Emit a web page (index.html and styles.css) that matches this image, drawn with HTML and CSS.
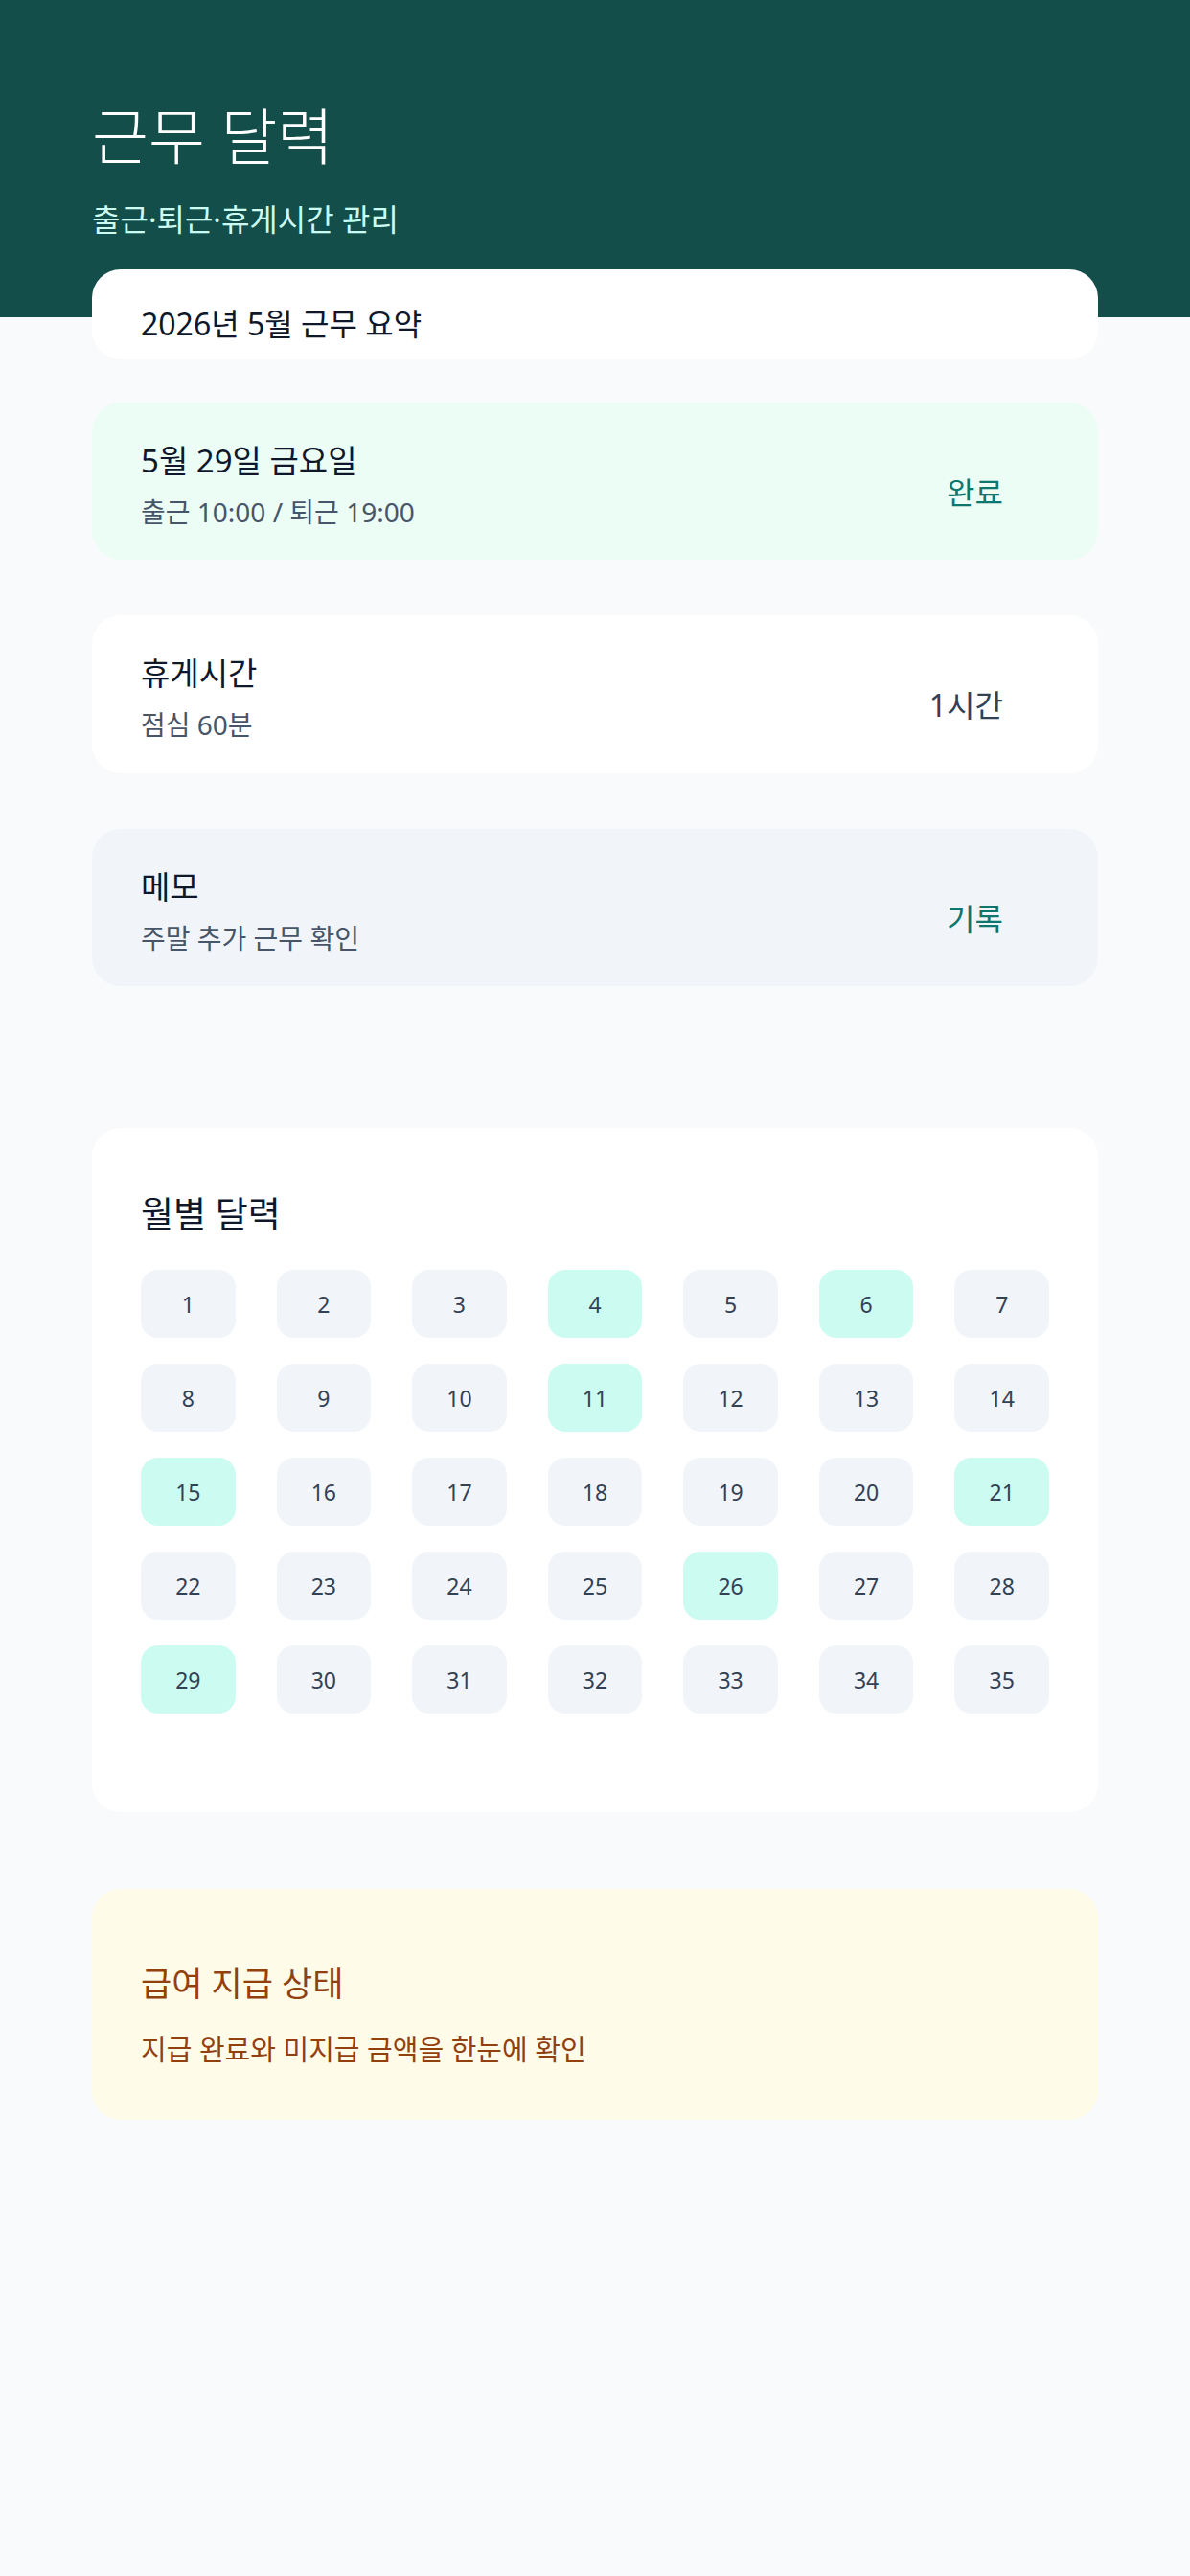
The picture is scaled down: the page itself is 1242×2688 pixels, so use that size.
FILE: index.html
```html
<!DOCTYPE html>
<html lang="ko">
<head>
    <meta charset="UTF-8">
    <meta name="viewport" content="width=device-width, initial-scale=1.0">
    <title>근무 달력</title>
    <link rel="stylesheet" href="styles.css">
</head>
<body>
    <header class="top">
        <h1>근무 달력</h1>
        <p>출근·퇴근·휴게시간 관리</p>
    </header>

    <main class="content">
        <div class="summary">2026년 5월 근무 요약</div>

        <div class="row-card done">
            <div>
                <div class="row-title">5월 29일 금요일</div>
                <div class="row-sub">출근 10:00 / 퇴근 19:00</div>
            </div>
            <div class="row-value teal">완료</div>
        </div>

        <div class="row-card plain">
            <div>
                <div class="row-title">휴게시간</div>
                <div class="row-sub">점심 60분</div>
            </div>
            <div class="row-value">1시간</div>
        </div>

        <div class="row-card memo">
            <div>
                <div class="row-title">메모</div>
                <div class="row-sub">주말 추가 근무 확인</div>
            </div>
            <div class="row-value teal">기록</div>
        </div>

        <section class="calendar-card">
            <h2>월별 달력</h2>
            <div class="calendar-grid" id="calendarGrid">
                <!-- 날짜는 아래 스크립트로 생성 -->
            </div>
        </section>

        <section class="pay-card">
            <h3>급여 지급 상태</h3>
            <p>지급 완료와 미지급 금액을 한눈에 확인</p>
        </section>
    </main>

    <script>
        const calendarGrid = document.getElementById('calendarGrid');
        // 근무한 날 표시
        const workedDays = [4, 6, 11, 15, 21, 26, 29];

        for (let day = 1; day <= 35; day++) {
            const cell = document.createElement('div');
            cell.classList.add('day');
            if (workedDays.includes(day)) {
                cell.classList.add('worked');
            }
            cell.textContent = day;
            calendarGrid.appendChild(cell);
        }
    </script>
</body>
</html>
```

FILE: styles.css
```css
* {
    box-sizing: border-box;
}

body {
    margin: 0;
    background-color: #f8fafc;
    font-family: "Noto Sans", "Noto Sans CJK KR", sans-serif;
    color: #0f172a;
}

.top {
    height: 331px;
    padding: 103px 96px 0;
    background-color: #134e4a;
}

.top h1 {
    margin: 0;
    font-size: 64px;
    line-height: 78px;
    font-weight: 300;
    color: #ffffff;
}

.top p {
    margin: 24px 0 0;
    font-size: 32px;
    line-height: 48px;
    color: #ccfbf1;
}

.content {
    margin-top: -50px;
    padding: 0 96px 200px;
}

.summary {
    padding: 34px 51px 13px;
    background: #ffffff;
    border-radius: 30px;
    font-size: 32px;
    line-height: 46.5px;
}

.row-card {
    display: flex;
    justify-content: space-between;
    align-items: flex-start;
    margin-top: 58px;
    padding: 38px 99px 30px 51px;
    border-radius: 30px;
}

.row-card.done {
    margin-top: 45px;
    background-color: #ecfdf5;
}

.row-card.plain {
    background-color: #ffffff;
}

.row-card.memo {
    background-color: #f1f5f9;
}

.row-title {
    font-size: 33px;
    line-height: 46.5px;
}

.row-sub {
    margin-top: 9.5px;
    font-size: 28px;
    line-height: 40.5px;
    color: #475569;
}

.row-value {
    margin-top: 33px;
    font-size: 32px;
    line-height: 45px;
    color: #334155;
}

.row-value.teal {
    color: #0f766e;
}

.calendar-card {
    margin-top: 148px;
    padding: 65px 51px 103px;
    background: #ffffff;
    border-radius: 30px;
}

.calendar-card h2 {
    margin: 0 0 34px;
    font-size: 37px;
    line-height: 49px;
    font-weight: 400;
}

.calendar-grid {
    display: grid;
    grid-template-columns: repeat(7, 1fr);
    column-gap: 43px;
    row-gap: 27px;
}

.day {
    display: flex;
    align-items: center;
    justify-content: center;
    height: 71px;
    background-color: #f1f5f9;
    border-radius: 18px;
    font-size: 23px;
    color: #334155;
}

.day.worked {
    background-color: #ccfbf1;
}

.pay-card {
    margin-top: 80px;
    padding: 75px 51px 52px;
    background-color: #fefce8;
    border-radius: 30px;
    color: #92400e;
}

.pay-card h3 {
    margin: 0;
    font-size: 35px;
    line-height: 47.6px;
    font-weight: 400;
}

.pay-card p {
    margin: 24px 0 0;
    font-size: 29px;
    line-height: 42px;
}
```
